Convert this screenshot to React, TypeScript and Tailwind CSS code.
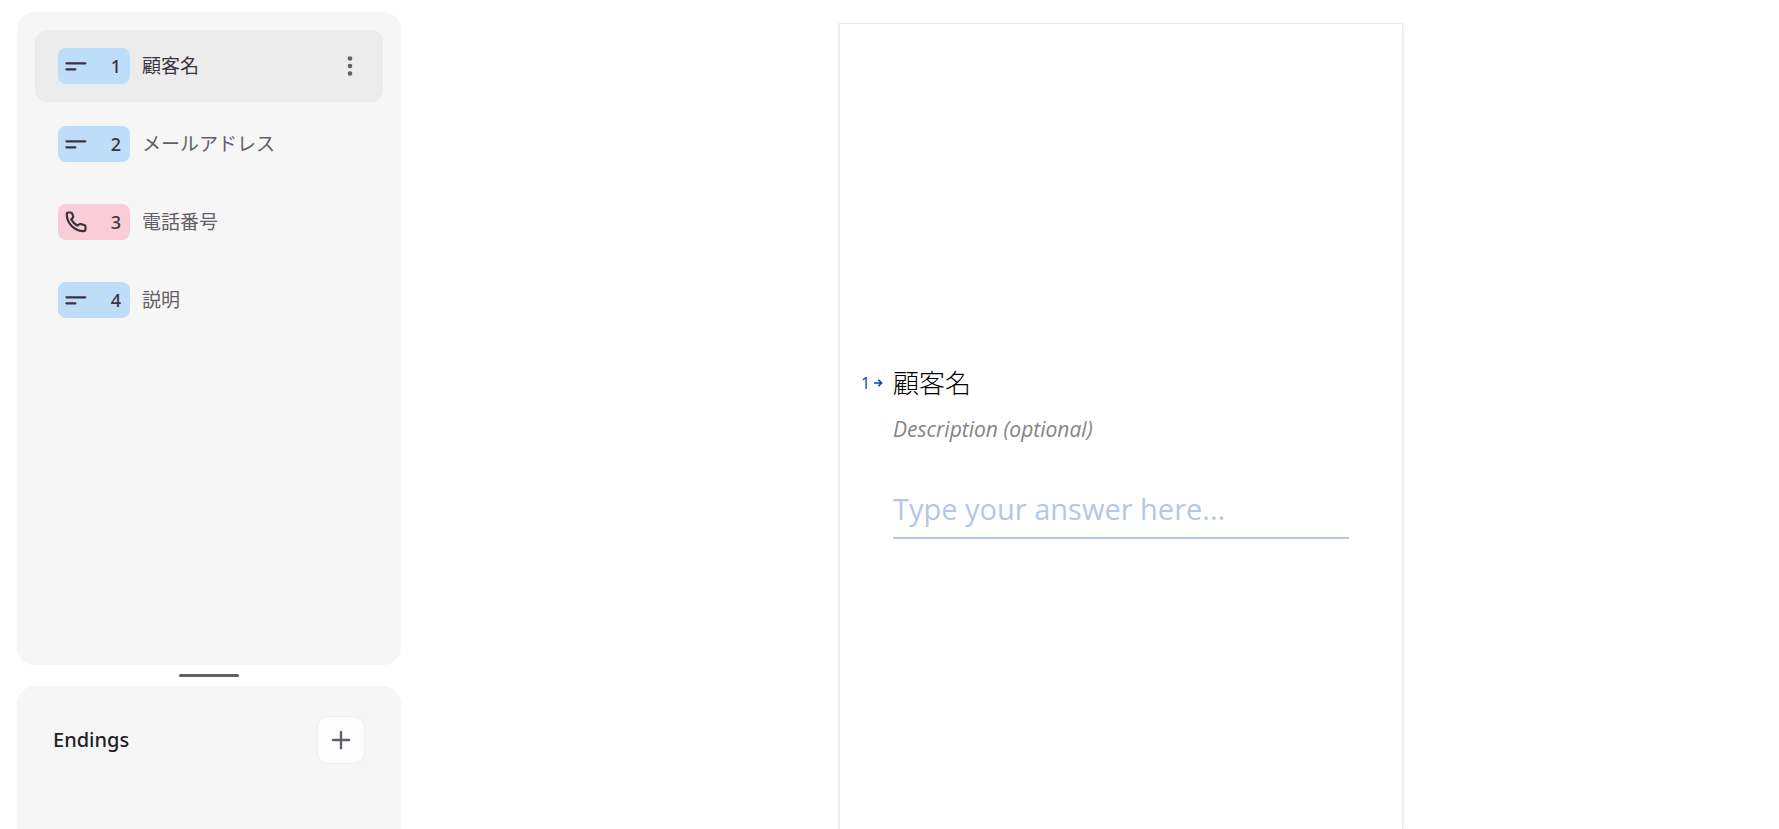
import { Plus } from "lucide-react";

type Question = {
  id: number;
  title: string;
  kind: "text" | "phone";
};

const questions: Question[] = [
  { id: 1, title: "顧客名", kind: "text" },
  { id: 2, title: "メールアドレス", kind: "text" },
  { id: 3, title: "電話番号", kind: "phone" },
  { id: 4, title: "説明", kind: "text" },
];

function ShortTextIcon() {
  return (
    <svg width="24" height="24" viewBox="0 0 24 24" fill="none" stroke="currentColor" strokeWidth="2.3" strokeLinecap="round" aria-hidden>
      <path d="M3.5 9.3H22.3M3.5 15.3H12.3" />
    </svg>
  );
}

function PhoneIcon() {
  return (
    <svg width="24" height="24" viewBox="0 0 24 24" fill="none" stroke="currentColor" strokeWidth="2.2" strokeLinejoin="round" aria-hidden>
      <path d="M5.3 2.5H7.6Q8.8 2.5 9.2 3.6L10.1 6.2Q10.4 7.3 9.6 8.1L8.3 9.4Q10.5 13.6 14.5 15.7L15.9 14.5Q16.8 13.8 17.9 14.1L21.3 15Q22.5 15.4 22.5 16.5V19.3Q22.5 21.2 20.5 21.2C11.3 20.8 3.8 13.2 3.8 4.2Q3.8 2.5 5.3 2.5Z" />
    </svg>
  );
}

function DotsIcon() {
  return (
    <svg width="24" height="24" viewBox="0 0 24 24" fill="currentColor" aria-hidden>
      <circle cx="12" cy="4.5" r="2.3" />
      <circle cx="12" cy="12" r="2.3" />
      <circle cx="12" cy="19.5" r="2.3" />
    </svg>
  );
}

function QuestionItem({ question, active }: { question: Question; active: boolean }) {
  return (
    <li
      className={`flex h-[72px] items-center rounded-xl pl-[23px] pr-[21px] ${
        active ? "bg-[#ececec] text-[#3c323e]" : "text-[#655d67]"
      }`}
    >
      <button type="button" className="flex flex-1 items-center gap-3 text-left">
        <span
          className={`flex h-9 w-[72px] items-center justify-between rounded-lg pl-[5px] pr-[9px] text-[#3c323e] ${
            question.kind === "phone" ? "bg-[#f8cdd8]" : "bg-[#bdddf9]"
          }`}
        >
          {question.kind === "phone" ? <PhoneIcon /> : <ShortTextIcon />}
          <span className="font-['Noto_Sans',sans-serif] text-lg font-medium">{question.id}</span>
        </span>
        <span className="text-[19px] leading-7">{question.title}</span>
      </button>
      {active && (
        <button type="button" aria-label="Question options" className="text-[#655d67]">
          <DotsIcon />
        </button>
      )}
    </li>
  );
}

export default function App() {
  return (
    <div className="flex h-screen overflow-hidden bg-white pl-[17px] font-['Open_Sans','Noto_Sans_CJK_JP',sans-serif]">
      <aside className="flex w-96 shrink-0 flex-col pt-3">
        <nav aria-label="Questions" className="min-h-0 flex-1 rounded-[18px] bg-[#f6f6f6] p-[18px]">
          <ul className="flex flex-col gap-1.5">
            {questions.map((q) => (
              <QuestionItem key={q.id} question={q} active={q.id === 1} />
            ))}
          </ul>
        </nav>

        {/* Resize handle */}
        <div className="flex h-[21px] shrink-0 items-center justify-center">
          <div className="h-[3px] w-[60px] rounded-full bg-[#655d67]" />
        </div>

        <section className="h-[143px] shrink-0 rounded-t-[18px] bg-[#f6f6f6] px-9 pt-[30px]">
          <div className="flex items-center justify-between">
            <h2 className="font-['Noto_Sans',sans-serif] text-xl font-medium text-[#222222]">Endings</h2>
            <button
              type="button"
              aria-label="Add ending"
              className="flex size-12 items-center justify-center rounded-xl border border-[#efefef] bg-[#fdfdfd] text-[#655d67]"
            >
              <Plus className="size-7" aria-hidden />
            </button>
          </div>
        </section>
      </aside>

      <main className="flex flex-1 justify-center pl-[62px] pt-[23px]">
        <div className="flex w-full max-w-[564px] flex-col justify-center border-x border-t border-[#ebebeb] px-[53px] pt-[50px] shadow-sm">
          <div className="flex items-center">
            <span className="-ml-8 flex w-8 items-center gap-1 text-base text-[#0445af]">
              1
              <svg width="9" height="8" viewBox="0 0 9 8" fill="none" stroke="currentColor" strokeWidth="1.6" aria-hidden>
                <path d="M0 4H7.6M4.3 0.8L7.6 4L4.3 7.2" />
              </svg>
            </span>
            <h1 className="text-[26px] font-light leading-9 text-black">顧客名</h1>
          </div>
          <p className="mt-3 text-[21px] italic leading-8 text-[#858585]">Description (optional)</p>
          <input
            type="text"
            aria-label="顧客名"
            placeholder="Type your answer here..."
            className="mt-11 w-full border-b-2 border-[#b4c7e7] pb-2 text-[29px] leading-10 outline-none placeholder:text-[#b4c7e7]"
          />
        </div>
      </main>
    </div>
  );
}
